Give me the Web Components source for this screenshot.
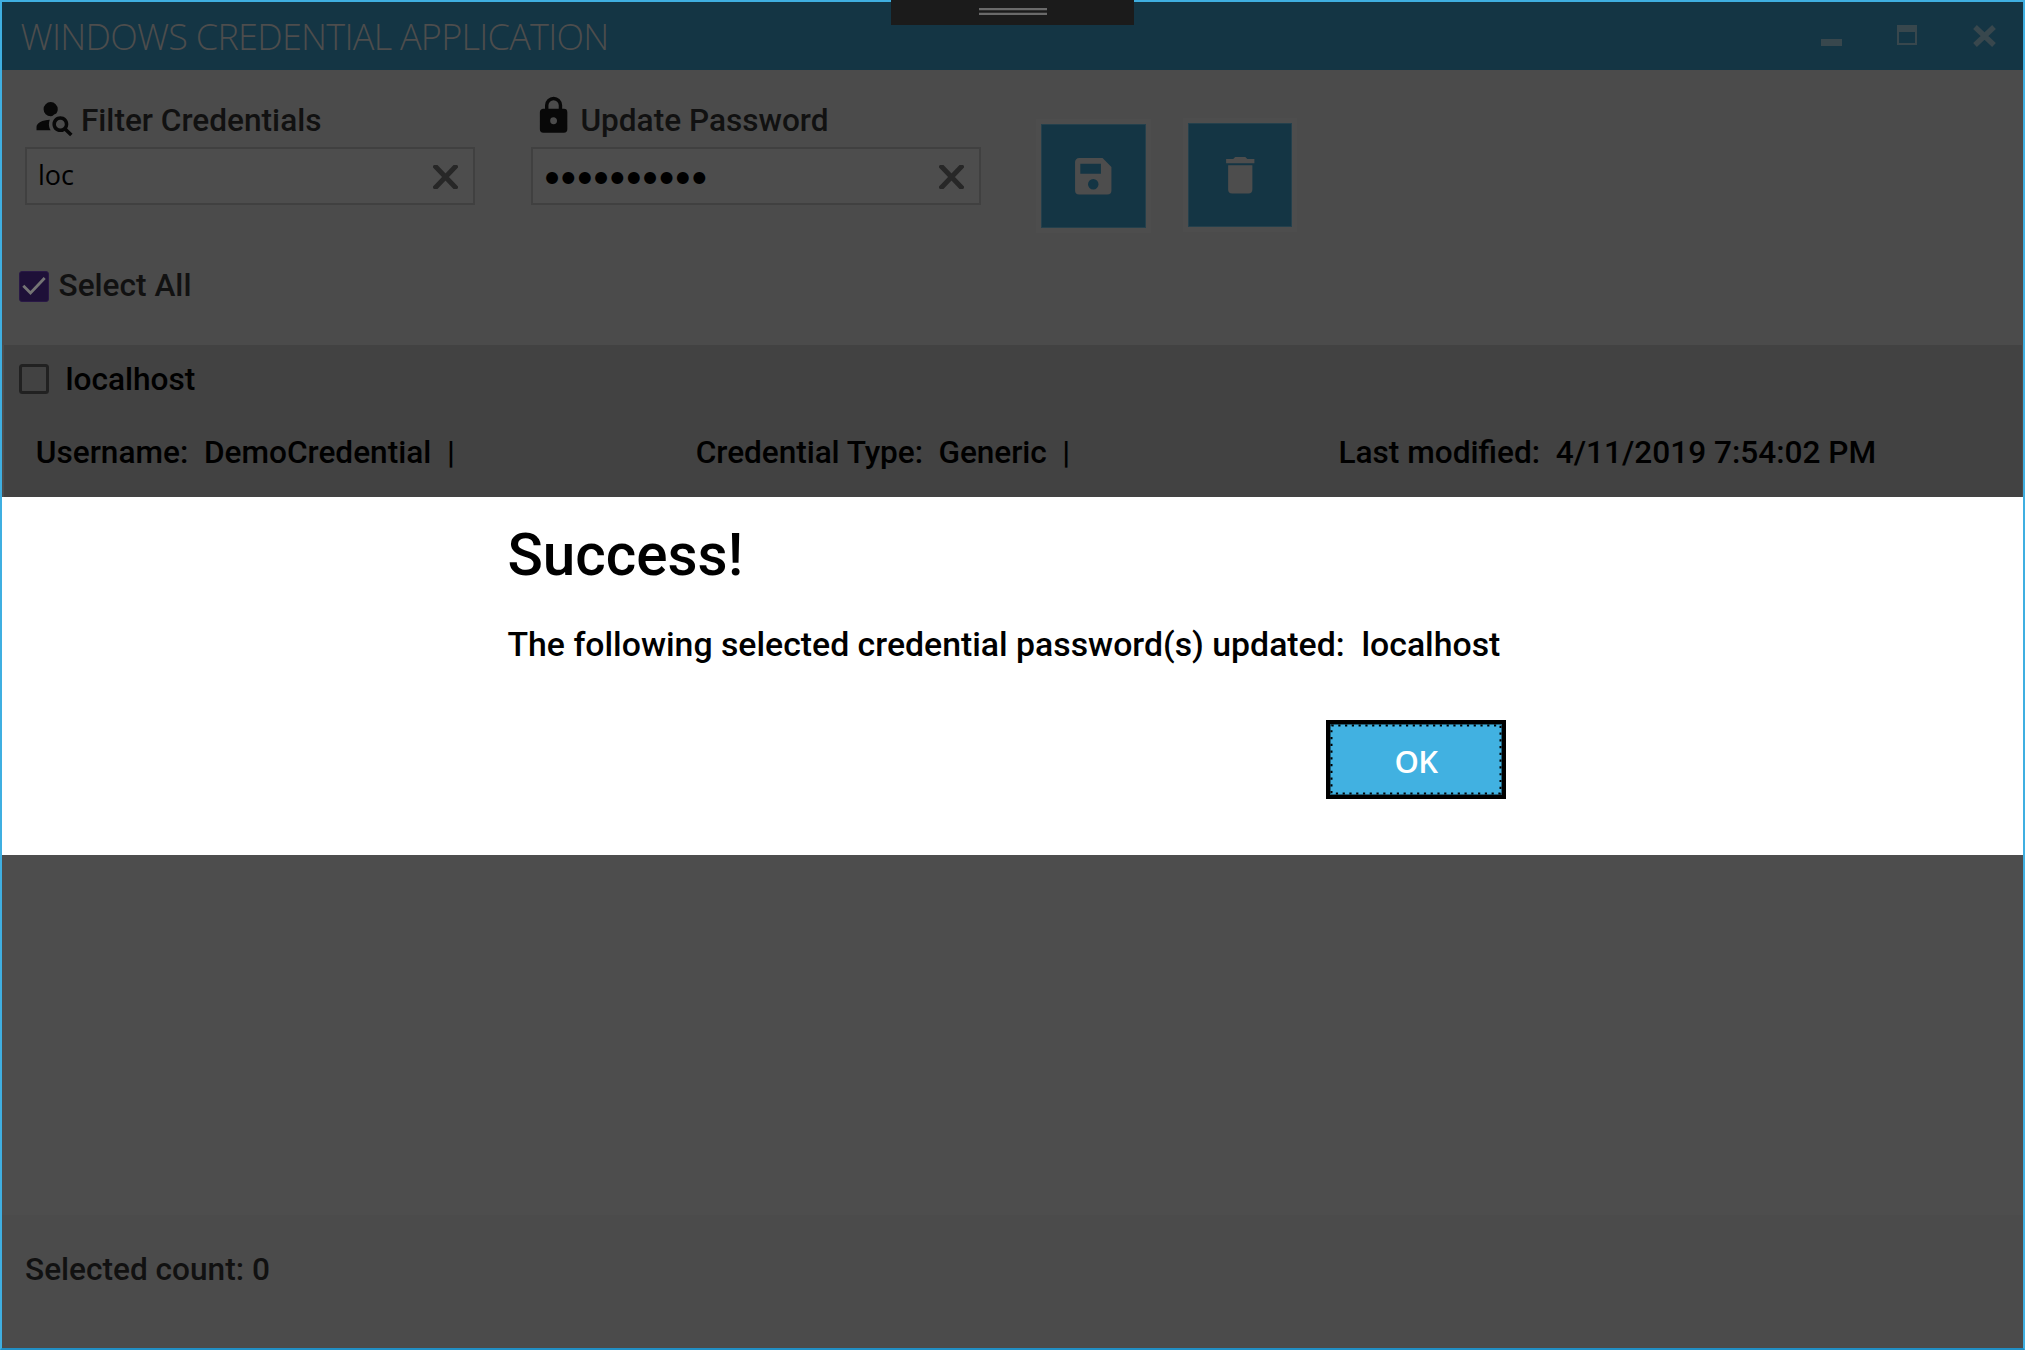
<!DOCTYPE html>
<html lang="en">
<head>
<meta charset="utf-8">
<title>Windows Credential Application</title>
<style>
html,body{margin:0;height:100%;overflow:hidden;background:#4b4b4b}
body{font:500 31.6px/37px Roboto,sans-serif;color:#000}
</style>
</head>
<body>
<cred-app></cred-app>
<script>
const define = (name, html) => customElements.define(name, class extends HTMLElement {
  constructor() {
    super();
    this.attachShadow({ mode: 'open' }).innerHTML = html;
  }
});

define('title-bar', `
<style>
:host{display:flex;justify-content:space-between;box-sizing:border-box;height:68px;padding:10px 27px 0 18.6px;background:#143544;color:#4d4d4d}
h1{margin:0;font:300 36px/49px "Open Sans",sans-serif;letter-spacing:-.74px;white-space:nowrap}
svg{display:block;width:175px;height:22px;margin-top:13px}
</style>
<h1><slot></slot></h1>
<svg viewBox="0 0 175 22" fill="#38474d"><path d="M0 14h21v7H0z"/><path fill-rule="evenodd" d="M76 0h20v20H76zM78 7v11h16V7z"/><path d="M154 2l19 18M173 2l-19 18" stroke="#38474d" stroke-width="5.4"/></svg>`);

define('drag-handle', `
<style>
:host{display:flex;justify-content:center;box-sizing:border-box;width:243px;height:25px;padding-top:8px;background:#1b1b1b}
i{box-sizing:border-box;width:68px;height:7px;background:linear-gradient(#6a6a6a 2px,#303030 2px 3px,#1b1b1b 3px 4px,#303030 4px 5px,#6a6a6a 5px)}
</style><i></i>`);

define('field-box', `
<style>
:host{display:block;width:450px}
label{display:flex;height:52px;color:#111;white-space:nowrap}
label span{margin-top:7px}
.box{display:flex;justify-content:space-between;box-sizing:border-box;height:58px;border:2px solid #404040;background:#4d4d4d;padding:0 15px 0 11px}
.box svg{width:25px;height:24px;margin-top:16px}
</style>
<label><slot name="icon"></slot><span><slot name="label"></slot></span></label>
<div class="box"><slot></slot><svg viewBox="0 0 25 24"><path d="M1 0L24 24M24 0L1 24" stroke="#272727" stroke-width="5"/></svg></div>`);

define('account-search-icon', `
<style>:host{display:block;width:42.4px;height:42.4px;margin:0 6px 0 7.5px}svg{display:block}</style>
<svg width="42.4" height="42.4" viewBox="0 0 24 24" fill="#080808"><path d="M15.5,12C18,12 20,14 20,16.5C20,17.38 19.75,18.21 19.31,18.9L22.39,22L21,23.39L17.88,20.32C17.19,20.75 16.37,21 15.5,21C13,21 11,19 11,16.5C11,14 13,12 15.5,12M15.5,14A2.5,2.5 0 0,0 13,16.5A2.5,2.5 0 0,0 15.5,19A2.5,2.5 0 0,0 18,16.5A2.5,2.5 0 0,0 15.5,14M10,4A4,4 0 0,1 14,8C14,8.91 13.69,9.75 13.18,10.43C12.32,10.75 11.55,11.26 10.91,11.9L10,12A4,4 0 0,1 6,8A4,4 0 0,1 10,4M2,20V18C2,15.88 5.31,14.14 9.5,14C9.18,14.78 9,15.62 9,16.5C9,17.79 9.38,19 10,20H2Z"/></svg>`);

define('lock-icon', `
<style>:host{display:block;width:41.2px;height:41.2px;margin:0 6.2px 0 2px}svg{display:block}</style>
<svg width="41.2" height="41.2" viewBox="0 0 24 24" fill="#080808"><path d="M12,17A2,2 0 0,0 14,15C14,13.89 13.1,13 12,13A2,2 0 0,0 10,15A2,2 0 0,0 12,17M18,8A2,2 0 0,1 20,10V20A2,2 0 0,1 18,22H6A2,2 0 0,1 4,20V10C4,8.89 4.9,8 6,8H7V6A5,5 0 0,1 12,1A5,5 0 0,1 17,6V8H18M12,3A3,3 0 0,0 9,6V8H15V6A3,3 0 0,0 12,3Z"/></svg>`);

define('tile-button', `
<style>
:host{display:grid;place-items:center;box-sizing:border-box;width:104px;height:104px;background:#143544;border:1px solid #24404c;box-shadow:0 0 0 5px #4d4d4d}
::slotted(svg){width:48.5px;height:48.5px;fill:#4d4d4d}
</style><slot></slot>`);

define('check-item', `
<style>
:host{display:flex;white-space:nowrap}
svg{display:block;width:30px;height:31px}
.on,:host([checked]) .off{display:none}
:host([checked]) .on{display:block}
span{margin-left:var(--gap,10px);margin-top:var(--drop,0)}
</style>
<svg viewBox="0 0 30 31"><g class="off"><rect x="1.5" y="1.5" width="27" height="27" rx="2" fill="none" stroke="#212121" stroke-width="3"/></g><g class="on"><rect x=".5" y=".5" width="29" height="30" rx="2.5" fill="#1e1038" stroke="#291846"/><path d="M4.3 14.7L11.5 22L25.7 7" fill="none" stroke="#747474" stroke-width="2.8"/></g></svg>
<span><slot></slot></span>`);

define('credential-row', `
<style>
:host{display:block;box-sizing:border-box;height:152px;padding:19px 15px 0;background:#424242;margin:0 1px 0 2px}
check-item{--gap:16.5px;--drop:-3px;height:70px}
.facts{display:grid;grid-template-columns:660px 642.7px auto;padding-left:16.8px;white-space:pre}
.type{letter-spacing:-.06px}
</style>
<check-item><slot name="target"></slot></check-item>
<div class="facts"><span>Username:&nbsp; DemoCredential&nbsp; |</span><span class="type">Credential Type:&nbsp; Generic&nbsp; |</span><span>Last modified:&nbsp; 4/11/2019 7:54:02 PM</span></div>`);

define('ok-button', `
<style>
:host{display:grid;box-sizing:border-box;width:180px;height:79px;border:4px solid #000;background:#41b1e1;color:#fff;font:600 31px/42px "Open Sans",sans-serif;letter-spacing:-.7px}
svg,span{grid-area:1/1}
span{justify-self:center;margin-top:16px}
</style>
<svg width="172" height="71"><rect x=".5" y=".5" width="171" height="70" fill="none" stroke="#24647f"/><rect x="1.5" y="1.5" width="169" height="68" fill="none" stroke="#000" stroke-width="2" stroke-dasharray="2.2 4.57"/></svg>
<span><slot></slot></span>`);

define('message-dialog', `
<style>
:host{display:flex;flex-direction:column;box-sizing:border-box;height:358px;padding:24px 517px 0 505.5px;background:#fff}
h2{margin:0;font:500 58.4px/68px Roboto,sans-serif}
p{margin:36px 0 0;font:500 33.8px/39px Roboto,sans-serif;white-space:nowrap}
ok-button{align-self:flex-end;margin-top:56px}
</style>
<h2><slot name="heading"></slot></h2><p><slot></slot></p><ok-button>OK</ok-button>`);

define('cred-app', `
<style>
:host{display:flex;flex-direction:column;position:relative;box-sizing:border-box;height:1350px;border:2px solid #3fafe1;border-bottom-color:#218fc5;background:#4b4b4b}
drag-handle{position:absolute;left:889px;top:-2px}
.tools{display:flex;box-sizing:border-box;height:201px;padding:25px 0 0 23px}
.tools field-box+field-box{margin-left:56px}
.save{width:105px;margin:29px 0 0 60px}
.delete{margin:28px 0 0 42px}
.val{font:400 27px/37px "Open Sans",sans-serif;margin:7px 0 0 0}
.dots{font:400 15.6px/20px "DejaVu Sans",sans-serif;letter-spacing:2.75px;margin:18px 0 0 1.2px}
.all{height:50px;margin-left:17px;color:#111;--gap:9.5px;--drop:-4px}
.list{flex:1;background:#4d4d4d}
.all-row{height:74px}
.foot{box-sizing:border-box;height:133px;padding:36px 23px 0;background:#4b4b4b;color:#111}
message-dialog{position:absolute;left:0;right:0;top:495px}
</style>
<title-bar>WINDOWS CREDENTIAL APPLICATION</title-bar>
<drag-handle></drag-handle>
<div class="tools">
<field-box><account-search-icon slot="icon"></account-search-icon><span slot="label">Filter Credentials</span><span class="val">loc</span></field-box>
<field-box><lock-icon slot="icon"></lock-icon><span slot="label">Update Password</span><span class="dots">●●●●●●●●●●</span></field-box>
<tile-button class="save"><svg viewBox="0 0 24 24"><path fill-rule="evenodd" d="M5.6,5.8V10.8H15.8V5.8ZM12,13.4A2.6,2.6 0 0,0 12,18.6A2.6,2.6 0 0,0 12,13.4M16.6,3H5C3.89,3 3,3.9 3,5V19A2,2 0 0,0 5,21H19A2,2 0 0,0 21,19V7.4Z"/></svg></tile-button>
<tile-button class="delete"><svg viewBox="0 0 24 24"><path d="M19,4H15.5L14.5,3H9.5L8.5,4H5V6H19V4M6,19A2,2 0 0,0 8,21H16A2,2 0 0,0 18,19V7H6V19Z"/></svg></tile-button>
</div>
<div class="all-row"><check-item class="all" checked>Select All</check-item></div>
<div class="list"><credential-row><span slot="target">localhost</span></credential-row></div>
<div class="foot">Selected count: 0</div>
<message-dialog><span slot="heading">Success!</span>The following selected credential password(s) updated:&nbsp; localhost</message-dialog>`);
</script>
</body>
</html>
